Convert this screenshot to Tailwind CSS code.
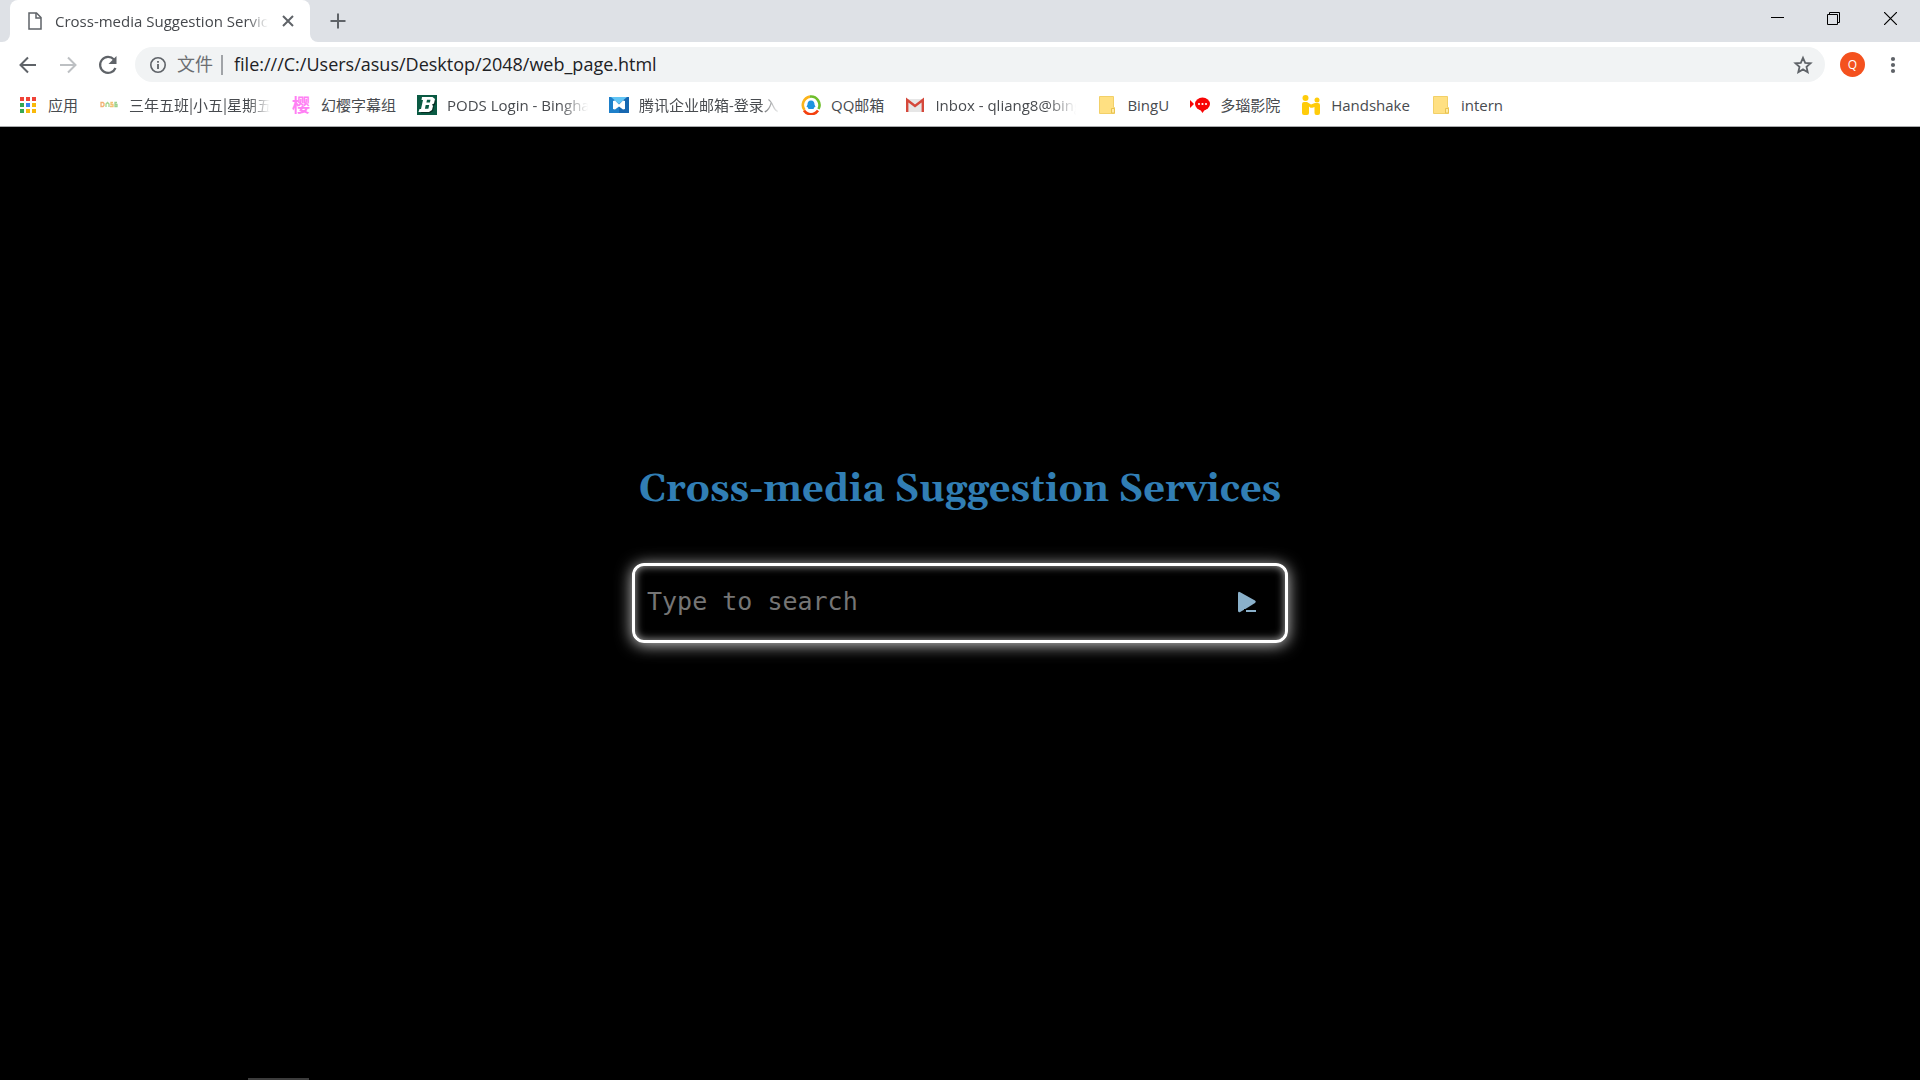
<!DOCTYPE html>
<html lang="zh-CN">

<head>
    <meta charset="UTF-8">
    <meta name="viewport" content="width=device-width, initial-scale=1.0">
    <script src="https://cdn.jsdelivr.net/npm/@tailwindcss/browser@4"></script>
    <title>Cross-media Suggestion Services</title>
</head>

<body class="flex flex-col min-h-screen bg-black font-['Open_Sans','Noto_Sans_CJK_SC',sans-serif] overflow-hidden">
    <!-- Tab strip -->
    <div class="flex h-[42px] bg-[#dee1e6]">
        <div class="w-[10px] bg-white">
            <div class="h-full bg-[#dee1e6] rounded-br-lg"></div>
        </div>
        <div class="flex items-center w-[300px] bg-white rounded-t-lg pl-[18px] pr-3">
            <svg class="w-[14px] h-[18px] shrink-0" viewBox="0 0 14 18" fill="none" stroke="#5f6368" stroke-width="1.5">
                <path d="M1 1h7.5L13 5.500V17H1z" />
                <path d="M8 1v5h5" />
            </svg>
            <span
                class="ml-[13px] w-[220px] overflow-hidden whitespace-nowrap text-[15px] leading-5 text-[#45484c] mask-r-from-90%">Cross-media
                Suggestion Services</span>
            <button class="ml-[10px] p-1 shrink-0" aria-label="关闭标签页">
                <svg class="w-3 h-3" viewBox="0 0 12 12" stroke="#5f6368" stroke-width="2">
                    <path d="M1 1l10 10M11 1L1 11" />
                </svg>
            </button>
        </div>
        <div class="w-[10px] bg-white">
            <div class="h-full bg-[#dee1e6] rounded-bl-lg"></div>
        </div>
        <button class="ml-[6px] px-1" aria-label="新标签页">
            <svg class="w-4 h-4" viewBox="0 0 16 16" stroke="#5f6368" stroke-width="2">
                <path d="M8 0.5v15M0.5 8h15" />
            </svg>
        </button>
        <div class="ml-auto flex pb-[6px]">
            <button class="w-[56px] flex items-center justify-center" aria-label="最小化">
                <svg class="w-[13px] h-[13px]" viewBox="0 0 13 13" stroke="#000">
                    <path d="M0 5.5h13" />
                </svg>
            </button>
            <button class="w-[56px] flex items-center justify-center" aria-label="还原">
                <svg class="w-[13px] h-[13px]" viewBox="0 0 13 13" fill="none" stroke="#000">
                    <path d="M0.5 2.5h10v10h-10zM2.5 2.5v-2h10v10h-2" />
                </svg>
            </button>
            <button class="w-[59px] flex items-center justify-center" aria-label="关闭">
                <svg class="w-[13px] h-[13px]" viewBox="0 0 13 13" stroke="#000" stroke-width="1.2">
                    <path d="M0 0l13 13M13 0L0 13" />
                </svg>
            </button>
        </div>
    </div>

    <!-- Toolbar -->
    <div class="flex items-center h-[45px] bg-white pl-4 pr-[15px]">
        <button class="w-6 h-6" aria-label="后退">
            <svg viewBox="0 0 24 24" fill="none" stroke="#5f6368" stroke-width="2">
                <path d="M20 12H5M12 4.5L4.5 12l7.500 7.500" />
            </svg>
        </button>
        <button class="w-6 h-6 ml-4" aria-label="前进">
            <svg viewBox="0 0 24 24" fill="none" stroke="#bdc0c3" stroke-width="2">
                <path d="M4 12h15M12 4.500L19.500 12 12 19.500" />
            </svg>
        </button>
        <button class="w-6 h-6 ml-4" aria-label="重新加载">
            <svg viewBox="0 0 24 24">
                <path d="M18 6.500A8 8 0 1 0 19.500 15" fill="none" stroke="#5f6368" stroke-width="2.200" />
                <path d="M20.500 3v8h-8z" fill="#5f6368" />
            </svg>
        </button>
        <div class="flex flex-1 items-center h-[35px] ml-[15px] rounded-full bg-[#f1f3f4] pl-[15px] pr-3">
            <svg class="w-4 h-4" viewBox="0 0 16 16">
                <circle cx="8" cy="8" r="7.200" fill="none" stroke="#5f6368" stroke-width="1.600" />
                <path d="M8 7v5M8 4v1.800" stroke="#5f6368" stroke-width="1.800" />
            </svg>
            <span class="ml-[11px] pb-[2px] text-lg leading-6 text-[#6b6e72]">文件</span>
            <span class="ml-2 w-[2px] h-5 bg-[#a0a3a7]"></span>
            <input type="text" aria-label="地址" value="file:///C:/Users/asus/Desktop/2048/web_page.html"
                class="ml-[11px] pb-[2px] flex-1 text-lg leading-6 text-[#202124] outline-none">
            <button class="w-5 h-5" aria-label="添加书签">
                <svg viewBox="0 0 20 20" fill="none" stroke="#5f6368" stroke-width="1.800">
                    <path d="M10 2.800l2.200 5 5.400.5-4.100 3.600 1.200 5.300L10 14.400l-4.700 2.800 1.200-5.300-4.100-3.600 5.400-.5z" />
                </svg>
            </button>
        </div>
        <button class="ml-[15px] w-[25px] h-[25px] rounded-full bg-[#f4511e] text-white text-xs">Q</button>
        <button class="ml-4 w-6 h-6" aria-label="菜单">
            <svg viewBox="0 0 24 24" fill="#5f6368">
                <circle cx="12" cy="6" r="2.100" />
                <circle cx="12" cy="12" r="2.100" />
                <circle cx="12" cy="18" r="2.100" />
            </svg>
        </button>
    </div>

    <!-- Bookmarks bar -->
    <nav
        class="flex items-center gap-[21px] h-10 bg-white border-b border-[#a9abad] pl-[18px] pb-[3px] text-[15px] leading-5 text-[#484b4f] whitespace-nowrap">
        <a href="#" class="flex items-center gap-[10px]">
            <svg class="w-5 h-5" viewBox="0 0 20 20">
                <path d="M2 2h4v4H2zM8 2h4v4H8zM14 2h4v4h-4z" fill="#f04337" />
                <path d="M2 8h4v4H2zM2 14h4v4H2z" fill="#35a853" />
                <path d="M8 8h4v4H8z" fill="#3b82f4" />
                <path d="M14 8h4v4h-4zM8 14h4v4H8zM14 14h4v4h-4z" fill="#f9b90a" />
            </svg>应用
        </a>
        <a href="#" class="flex items-center gap-[10px]">
            <svg class="w-5 h-5" viewBox="0 0 20 20" fill="none" stroke-width="1.300">
                <path d="M2 7.500h2l1 1v2l-1 1H2z" stroke="#f3b173" />
                <path d="M7 12V9l1.500-1.500L10 9v3" stroke="#a5d68c" />
                <path d="M14 7.500h-2v2h2v2h-3" stroke="#f3c173" />
                <path d="M18 7.500h-2v4h2v-2h-2" stroke="#9bd08a" />
            </svg>
            <span class="w-[141px] overflow-hidden mask-r-from-85% font-['Noto_Sans_CJK_SC',sans-serif]">三年五班|小五|星期五</span>
        </a>
        <a href="#" class="flex items-center gap-[10px]">
            <span class="w-5 h-5 text-center text-lg leading-5 text-[#ff80f4] font-bold">樱</span>幻樱字幕组
        </a>
        <a href="#" class="flex items-center gap-[10px]">
            <svg class="w-5 h-5" viewBox="0 0 20 20">
                <path d="M0 0h20v20H0z" fill="#0a5a43" />
                <path d="M7 4h10l2 2-1 4-2 1 1 1-1 4-3 2H4z" fill="#062e22" />
                <path d="M5 2h10.500L18 4l-1 4.500-2 1 1 1.500-1 4-3 2H1.500l1-3h1.500l2-9H4.500z" fill="#fff" />
                <path d="M10 4.800h3.500l-.6 2.700H9.400zM8.700 10h3.500l-.8 3.800H7.900z" fill="#0a5a43" />
            </svg>
            <span class="w-[141px] overflow-hidden mask-r-from-80%">PODS Login - Binghamton</span>
        </a>
        <a href="#" class="flex items-center gap-[10px]">
            <svg class="w-5 h-5" viewBox="0 0 20 20">
                <path d="M0 2h20v16H0z" fill="#1767b0" />
                <path d="M0 2h10v16H0z" fill="#1d7fc9" />
                <path d="M2 2h16l-8 7z" fill="#62c5f5" />
                <path d="M4 6l2-.5 4 4 4-4 2 .5v8l-2 .5-4-3-4 3-2-.5z" fill="#fff" />
            </svg>
            <span class="w-[141px] overflow-hidden mask-r-from-85%">腾讯企业邮箱-登录入口</span>
        </a>
        <a href="#" class="flex items-center gap-[10px]">
            <svg class="w-5 h-5" viewBox="0 0 20 20" fill="none" stroke-width="2.600">
                <path d="M3.500 15A8.500 8.500 0 0 1 9 1.600" stroke="#fbb41a" />
                <path d="M9 1.600A8.500 8.500 0 0 1 17.500 14" stroke="#6fbe2c" />
                <path d="M17 15.500A8.500 8.500 0 0 1 3 15.500" stroke="#f4400f" />
                <path d="M10 5.500c2.600 0 3.500 2 3.500 4l1 2.500-1.200.3-.8 1.700h-5l-.8-1.700L5.500 12l1-2.500c0-2 .9-4 3.500-4z"
                    fill="#1c93e0" />
            </svg>QQ邮箱
        </a>
        <a href="#" class="flex items-center gap-[10px]">
            <svg class="w-5 h-5" viewBox="0 0 20 20">
                <path d="M1 4h18v13H1z" fill="#e6e6e6" />
                <path d="M2.200 17V5l7.800 6 7.800-6v12" fill="none" stroke="#d5483b" stroke-width="2.400" />
            </svg>
            <span class="w-[141px] overflow-hidden mask-r-from-80%">Inbox - qliang8@binghamton.edu</span>
        </a>
        <a href="#" class="flex items-center gap-[10px]">
            <svg class="w-5 h-5" viewBox="0 0 20 20">
                <path d="M2.500 1.500h14v11h1v6h-15z" fill="#ffe082" stroke="#f2d068" />
                <path d="M14.500 18v-4.500h3V18z" fill="#ffeaa5" stroke="#e9c34f" />
            </svg>BingU
        </a>
        <a href="#" class="flex items-center gap-[10px]">
            <svg class="w-5 h-5" viewBox="0 0 20 20" fill="#f80505">
                <path d="M0 5l4 4-4 4z" />
                <ellipse cx="12.500" cy="9" rx="7.500" ry="6.500" />
                <path d="M9 13h7l-3.500 5z" />
                <g fill="#fff">
                    <circle cx="9" cy="9" r="1.100" />
                    <circle cx="12.500" cy="9" r="1.100" />
                    <circle cx="16" cy="9" r="1.100" />
                </g>
            </svg>多瑙影院
        </a>
        <a href="#" class="flex items-center gap-[10px]">
            <svg class="w-5 h-5" viewBox="0 0 20 20" fill="#ffcc0a">
                <circle cx="4.500" cy="3" r="3" />
                <circle cx="16" cy="5" r="2.500" />
                <path d="M1 9q0-2 2-2h3l4 2.500L14 8h3q2 0 2 2v8q0 2-2 2h-1.500q-2 0-2-2v-6l-2 .8h-2L8 11.500V18q0 2-2 2H3q-2 0-2-2z" />
            </svg>Handshake
        </a>
        <a href="#" class="flex items-center gap-[10px]">
            <svg class="w-5 h-5" viewBox="0 0 20 20">
                <path d="M2.500 1.500h14v11h1v6h-15z" fill="#ffe082" stroke="#f2d068" />
                <path d="M14.500 18v-4.500h3V18z" fill="#ffeaa5" stroke="#e9c34f" />
            </svg>intern
        </a>
    </nav>

    <!-- Page -->
    <main class="flex-1 grid grid-rows-[1fr_auto_1fr] justify-items-center pb-[2px]">
        <h1
            class="self-end pb-12 text-center text-[38px] leading-[50px] font-bold text-[#317eb4] font-['Gelasio','Liberation_Serif',serif]">
            Cross-media Suggestion Services</h1>
        <form
            class="flex items-center w-[656px] h-20 border-[3px] border-white rounded-xl pl-3 pr-7 pb-[2px] shadow-[0_2px_16px_#ffffffcc,inset_0_0_8px_#ffffffb0]">
            <input type="text" aria-label="Search" placeholder="Type to search"
                class="flex-1 text-[25px] leading-8 text-white placeholder:text-[#757575] outline-none font-['DejaVu_Sans_Mono',monospace]">
            <button type="button" aria-label="Go">
                <svg class="w-5 h-[22px]" viewBox="0 0 20 22" fill="#8ab0ca">
                    <path d="M1 2.500Q1 0 3.200 1.200L18 9.500q1.800 1.200 0 2.500L10 17l-6.800 4Q1 22 1 19.500z" />
                    <path d="M7 18h13v4H7z" fill="#000" />
                    <path d="M9 19h10v2H9z" />
                </svg>
            </button>
        </form>
    </main>
    <div class="absolute bottom-0 left-[248px] w-[61px] h-[2px] bg-[#3c3c3c]"></div>
</body>

</html>
